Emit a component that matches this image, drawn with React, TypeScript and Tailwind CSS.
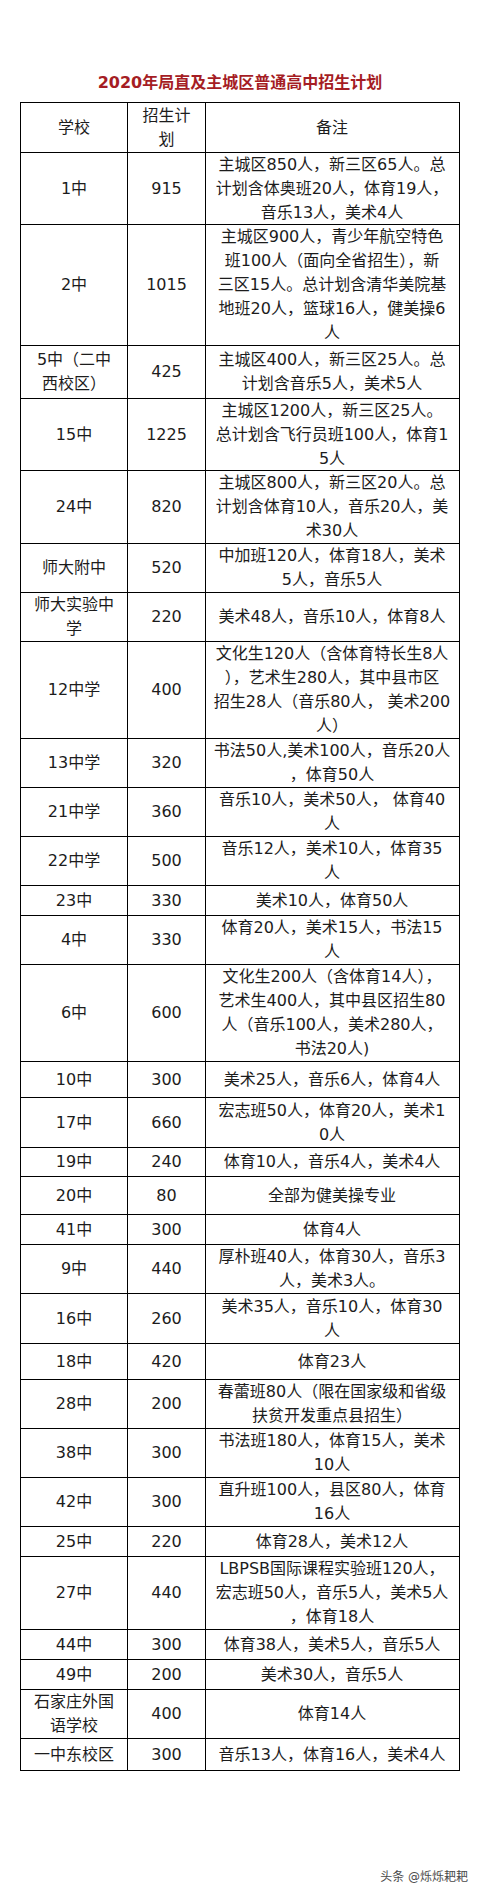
/**
 * 2020 high school enrolment plan table.
 */

interface PlanRow {
  school: string[]
  count: string
  notes: string[]
  h: string
}

// row heights come straight from the reference, lines are pre-broken like the original
const rows: PlanRow[] = [
  { school: ['1中'], count: '915', h: 'h-[72px]', notes: ['主城区850人，新三区65人。总', '计划含体奥班20人，体育19人，', '音乐13人，美术4人'] },
  { school: ['2中'], count: '1015', h: 'h-[121px]', notes: ['主城区900人，青少年航空特色', '班100人（面向全省招生），新', '三区15人。总计划含清华美院基', '地班20人，篮球16人，健美操6', '人'] },
  { school: ['5中（二中', '西校区）'], count: '425', h: 'h-[53px]', notes: ['主城区400人，新三区25人。总', '计划含音乐5人，美术5人'] },
  { school: ['15中'], count: '1225', h: 'h-[72px]', notes: ['主城区1200人，新三区25人。', '总计划含飞行员班100人，体育1', '5人'] },
  { school: ['24中'], count: '820', h: 'h-[73px]', notes: ['主城区800人，新三区20人。总', '计划含体育10人，音乐20人，美', '术30人'] },
  { school: ['师大附中'], count: '520', h: 'h-[49px]', notes: ['中加班120人，体育18人，美术', '5人，音乐5人'] },
  { school: ['师大实验中', '学'], count: '220', h: 'h-[49px]', notes: ['美术48人，音乐10人，体育8人'] },
  { school: ['12中学'], count: '400', h: 'h-[97px]', notes: ['文化生120人（含体育特长生8人', '），艺术生280人，其中县市区', '招生28人（音乐80人， 美术200', '人）'] },
  { school: ['13中学'], count: '320', h: 'h-[49px]', notes: ['书法50人,美术100人，音乐20人', '，体育50人'] },
  { school: ['21中学'], count: '360', h: 'h-[49px]', notes: ['音乐10人，美术50人， 体育40', '人'] },
  { school: ['22中学'], count: '500', h: 'h-[49px]', notes: ['音乐12人，美术10人，体育35', '人'] },
  { school: ['23中'], count: '330', h: 'h-[30px]', notes: ['美术10人，体育50人'] },
  { school: ['4中'], count: '330', h: 'h-[49px]', notes: ['体育20人，美术15人，书法15', '人'] },
  { school: ['6中'], count: '600', h: 'h-[97px]', notes: ['文化生200人（含体育14人），', '艺术生400人，其中县区招生80', '人（音乐100人，美术280人，', '书法20人)'] },
  { school: ['10中'], count: '300', h: 'h-[36px]', notes: ['美术25人，音乐6人，体育4人'] },
  { school: ['17中'], count: '660', h: 'h-[50px]', notes: ['宏志班50人，体育20人，美术1', '0人'] },
  { school: ['19中'], count: '240', h: 'h-[29px]', notes: ['体育10人，音乐4人，美术4人'] },
  { school: ['20中'], count: '80', h: 'h-[38px]', notes: ['全部为健美操专业'] },
  { school: ['41中'], count: '300', h: 'h-[30px]', notes: ['体育4人'] },
  { school: ['9中'], count: '440', h: 'h-[49px]', notes: ['厚朴班40人，体育30人，音乐3', '人，美术3人。'] },
  { school: ['16中'], count: '260', h: 'h-[50px]', notes: ['美术35人，音乐10人，体育30', '人'] },
  { school: ['18中'], count: '420', h: 'h-[36px]', notes: ['体育23人'] },
  { school: ['28中'], count: '200', h: 'h-[49px]', notes: ['春蕾班80人（限在国家级和省级', '扶贫开发重点县招生）'] },
  { school: ['38中'], count: '300', h: 'h-[49px]', notes: ['书法班180人，体育15人，美术', '10人'] },
  { school: ['42中'], count: '300', h: 'h-[49px]', notes: ['直升班100人，县区80人，体育', '16人'] },
  { school: ['25中'], count: '220', h: 'h-[30px]', notes: ['体育28人，美术12人'] },
  { school: ['27中'], count: '440', h: 'h-[73px]', notes: ['LBPSB国际课程实验班120人，', '宏志班50人，音乐5人，美术5人', '，体育18人'] },
  { school: ['44中'], count: '300', h: 'h-[30px]', notes: ['体育38人，美术5人，音乐5人'] },
  { school: ['49中'], count: '200', h: 'h-[30px]', notes: ['美术30人，音乐5人'] },
  { school: ['石家庄外国', '语学校'], count: '400', h: 'h-[49px]', notes: ['体育14人'] },
  { school: ['一中东校区'], count: '300', h: 'h-[31px]', notes: ['音乐13人，体育16人，美术4人'] },
]

function Lines({ lines }: { lines: string[] }) {
  return (
    <>
      {lines.map((line, i) => (
        <div key={i} className="whitespace-pre">
          {line}
        </div>
      ))}
    </>
  )
}

function Row({ row, last }: { row: PlanRow; last: boolean }) {
  return (
    <div className={`grid grid-cols-[106px_78px_253px] ${row.h} ${last ? '' : 'border-b border-black'}`}>
      <div className="flex flex-col items-center justify-center text-center">
        <Lines lines={row.school} />
      </div>
      <div className="flex flex-col items-center justify-center border-l border-black text-center">
        {row.count}
      </div>
      <div className="flex flex-col items-center justify-center border-l border-black text-center">
        <Lines lines={row.notes} />
      </div>
    </div>
  )
}

export default function App() {
  return (
    <div
      className="relative h-[1894px] w-[480px] bg-white text-[#1c1c1c]"
      style={{ fontFamily: '"DejaVu Sans", "Noto Sans CJK SC", sans-serif' }}
    >
      <div className="pt-[72px] text-center text-[16px] font-bold leading-[22px] text-[#a51d24]">
        2020年局直及主城区普通高中招生计划
      </div>

      <div className="mx-auto mt-[8px] w-[440px] border border-black text-[16px] leading-[24px]">
        {/* header */}
        <div className="grid h-[50px] grid-cols-[106px_78px_253px] border-b border-black">
          <div className="flex items-center justify-center">学校</div>
          <div className="flex flex-col items-center justify-center border-l border-black">
            <div>招生计</div>
            <div>划</div>
          </div>
          <div className="flex items-center justify-center border-l border-black">备注</div>
        </div>

        {rows.map((row, i) => (
          <Row key={i} row={row} last={i === rows.length - 1} />
        ))}
      </div>

      {/* watermark */}
      <div className="absolute right-[12px] top-[1869px] text-[12px] leading-[16px] text-[#4a4a4a]">
        头条 @烁烁耙耙
      </div>
    </div>
  )
}
